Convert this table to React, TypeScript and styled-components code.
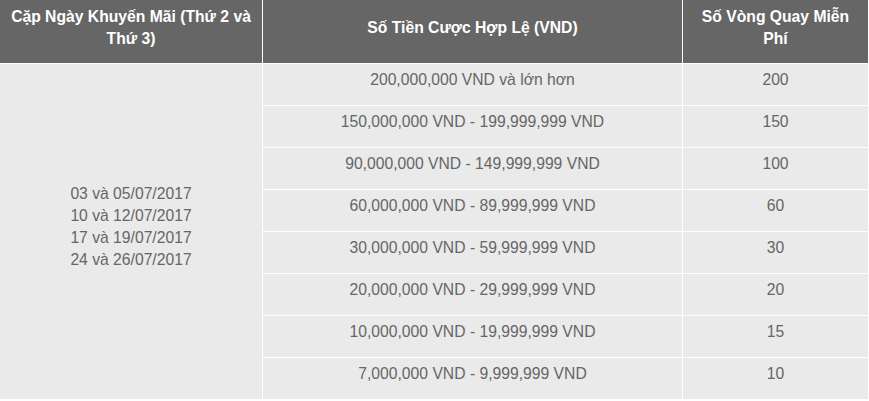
import React from 'react';
import styled, {createGlobalStyle} from 'styled-components';

const rows = [
    {amount: '200,000,000 VND và lớn hơn', spins: '200'},
    {amount: '150,000,000 VND - 199,999,999 VND', spins: '150'},
    {amount: '90,000,000 VND - 149,999,999 VND', spins: '100'},
    {amount: '60,000,000 VND - 89,999,999 VND', spins: '60'},
    {amount: '30,000,000 VND - 59,999,999 VND', spins: '30'},
    {amount: '20,000,000 VND - 29,999,999 VND', spins: '20'},
    {amount: '10,000,000 VND - 19,999,999 VND', spins: '15'},
    {amount: '7,000,000 VND - 9,999,999 VND', spins: '10'},
];

const dates = ['03 và 05/07/2017', '10 và 12/07/2017', '17 và 19/07/2017', '24 và 26/07/2017'];

export default function App() {
    return (
        <>
            <GlobalStyle />
            <PromoTable>
                <colgroup>
                    <col style={{width: 263}} />
                    <col style={{width: 420}} />
                    <col style={{width: 186}} />
                </colgroup>
                <thead>
                    <tr>
                        <HeadCell $padX={4}>Cặp Ngày Khuyến Mãi (Thứ 2 và Thứ 3)</HeadCell>
                        <HeadCell>Số Tiền Cược Hợp Lệ (VND)</HeadCell>
                        <HeadCell>Số Vòng Quay Miễn Phí</HeadCell>
                    </tr>
                </thead>
                <tbody>
                    {rows.map((row, i) => (
                        <tr key={row.spins}>
                            {i === 0 && (
                                <DateCell rowSpan={rows.length}>
                                    {dates.map(d => <div key={d}>{d}</div>)}
                                </DateCell>
                            )}
                            <Cell>{row.amount}</Cell>
                            <Cell>{row.spins}</Cell>
                        </tr>
                    ))}
                </tbody>
            </PromoTable>
        </>
    );
}

const GlobalStyle = createGlobalStyle`
    body {
        margin: 0;
        background: #fff;
        font-family: "Liberation Sans", Arial, sans-serif;
    }
`

const PromoTable = styled.table`
    width: 869px;
    table-layout: fixed;
    border-collapse: separate;
    border-spacing: 0;
    font-size: 15.7px;
    line-height: 22px;
    text-align: center;
`

const HeadCell = styled.th<{$padX?: number}>`
    height: 63px;
    box-sizing: border-box;
    padding: 6px ${props => props.$padX ?? 10}px 13px;
    background-color: #666;
    color: #fff;
    font-weight: bold;
    vertical-align: middle;
    border-right: 1px solid #fff;
    border-bottom: 1px solid #fff;
`

const Cell = styled.td`
    height: 41px;
    box-sizing: border-box;
    padding: 5px 10px 14px;
    background-color: #eaeaea;
    color: #666;
    vertical-align: middle;
    border-right: 1px solid #fff;
    border-bottom: 1px solid #fff;
`

const DateCell = styled(Cell)`
    height: auto;
`
